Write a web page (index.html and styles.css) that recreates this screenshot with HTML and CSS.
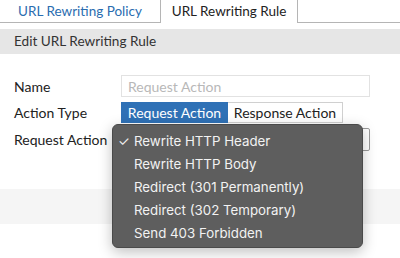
FILE: index.html
```html
<!DOCTYPE html>
<html lang="en">
<head>
  <meta charset="UTF-8">
  <meta name="viewport" content="width=device-width, initial-scale=1.0">
  <title>URL Rewriting Rule</title>
  <link rel="stylesheet" href="styles.css">
</head>
<body>
  <div class="tabs">
    <div class="tab">URL Rewriting Policy</div>
    <div class="tab active">URL Rewriting Rule</div>
  </div>

  <div class="section-title">Edit URL Rewriting Rule</div>

  <div class="form">
    <div class="row">
      <div class="label">Name</div>
      <input type="text" class="text-input" placeholder="Request Action">
    </div>
    <div class="row">
      <div class="label">Action Type</div>
      <div class="toggle">
        <button class="toggle-btn selected">Request Action</button>
        <button class="toggle-btn">Response Action</button>
      </div>
    </div>
    <div class="row">
      <div class="label">Request Action</div>
      <div class="select-box"></div>
    </div>
  </div>

  <div class="footer-bar"></div>

  <!-- open native-style popup over the select -->
  <ul class="menu">
    <li class="checked">Rewrite HTTP Header</li>
    <li>Rewrite HTTP Body</li>
    <li>Redirect (301 Permanently)</li>
    <li>Redirect (302 Temporary)</li>
    <li>Send 403 Forbidden</li>
  </ul>
</body>
</html>
```

FILE: styles.css
```css
body {
  margin: 0;
  font-family: Lato, "Open Sans", sans-serif;
  color: #222;
  background-color: white;
}
.tabs {
  display: flex;
  height: 22px;
  border-bottom: 1px solid #b5b5b5;
}
.tab {
  width: 160px;
  box-sizing: border-box;
  font-size: 13.5px;
  line-height: 22px;
  text-align: center;
  color: #2a6db0;
}
.tab.active {
  width: 138px;
  height: 23px;
  color: #222;
  background-color: white;
  border-left: 1px solid #b5b5b5;
  border-right: 1px solid #b5b5b5;
}
.section-title {
  margin-top: 6px;
  height: 25px;
  line-height: 25px;
  padding-left: 14px;
  font-size: 13.6px;
  color: #333;
  background-color: #e6e6e6;
}
.form {
  padding: 21px 0 0 14px;
  display: flex;
  flex-direction: column;
  gap: 5px;
}
.row {
  display: flex;
  align-items: center;
}
.label {
  width: 107px;
  font-size: 14px;
}
.text-input {
  width: 249px;
  height: 22px;
  box-sizing: border-box;
  border: 1px solid #e2e2e2;
  padding: 0 6px;
  font-family: Lato, sans-serif;
  font-size: 14px;
}
.text-input::placeholder {
  color: #b8b8b8;
}
.toggle {
  display: flex;
}
.toggle-btn {
  height: 21px;
  box-sizing: border-box;
  border: 1px solid #d0d0d0;
  background-color: white;
  padding: 0;
  white-space: nowrap;
  font-family: Lato, sans-serif;
  font-size: 14px;
  color: #222;
}
.toggle-btn.selected {
  width: 107px;
  background-color: #2f71b6;
  border-color: #2f71b6;
  color: white;
}
.toggle-btn + .toggle-btn {
  width: 115px;
  border-left: none;
}
.select-box {
  width: 249px;
  height: 23px;
  box-sizing: border-box;
  border: 1px solid #9a9a9a;
  border-radius: 2px;
  background-color: white;
}
.footer-bar {
  margin-top: 38px;
  height: 35px;
  background-color: #f5f5f5;
}
.menu {
  position: absolute;
  left: 112px;
  top: 124px;
  width: 251px;
  height: 124px;
  box-sizing: border-box;
  margin: 0;
  padding: 5px 0 4px;
  list-style: none;
  background-color: #5e5e5e;
  border: 1px solid #4a4a4a;
  border-radius: 6px;
  box-shadow: 0 4px 14px rgba(0,0,0,0.25);
  font-family: Inter, "Open Sans", sans-serif;
  font-size: 13.3px;
  color: #f2f2f2;
}
.menu li {
  position: relative;
  height: 23px;
  line-height: 23px;
  padding-left: 21px;
}
.menu li.checked::before {
  content: "\2713";
  position: absolute;
  left: 5px;
}
```
